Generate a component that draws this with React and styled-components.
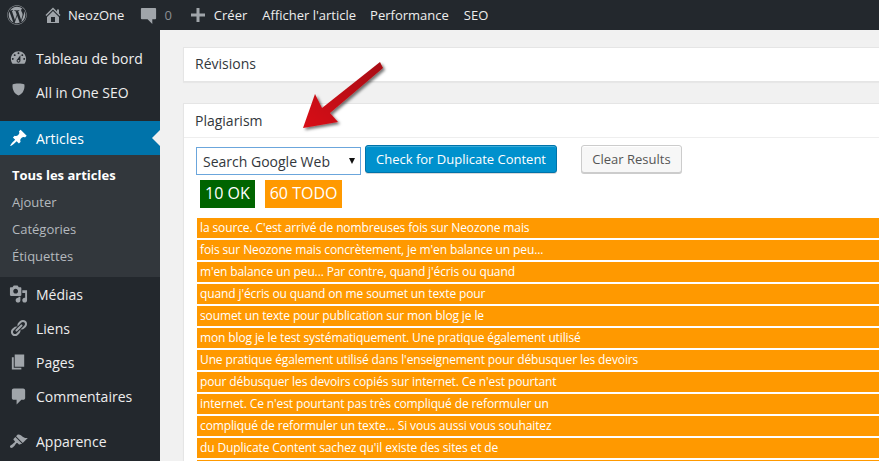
import styled, { createGlobalStyle } from "styled-components"
import { FaWordpress } from "react-icons/fa"

const GlobalStyle = createGlobalStyle`
  html, body {
    margin: 0;
    padding: 0;
    height: 100%;
    overflow: hidden;
    background: #f1f1f1;
    font-family: "Open Sans", sans-serif;
  }
`

const Page = styled.div`
  position: relative;
  width: 879px;
  height: 461px;
  overflow: hidden;
  display: flex;
  flex-direction: column;
`

const TopBar = styled.header`
  display: flex;
  align-items: center;
  flex: 0 0 30px;
  height: 30px;
  background: #23282d;
  color: #eee;
  font-size: 13px;
`

const BarItem = styled.div`
  display: flex;
  align-items: center;
  gap: ${(p) => p.$gap || 5}px;
  margin-left: ${(p) => p.$left || 0}px;
  color: ${(p) => p.$muted ? "#8a8e92" : "#eee"};
  white-space: nowrap;
  svg { color: #a0a5aa; flex: none; }
`

const Body = styled.div`
  display: flex;
  flex: 1;
  min-height: 0;
`

const Sidebar = styled.nav`
  flex: 0 0 160px;
  width: 160px;
  padding-top: 11px;
  background: #23282d;
`

const MenuItem = styled.div`
  position: relative;
  display: flex;
  align-items: center;
  height: 34px;
  padding-left: 9px;
  gap: 8px;
  margin-top: ${(p) => p.$top || 0}px;
  font-size: 14px;
  color: ${(p) => p.$active ? "#fff" : "#eee"};
  background: ${(p) => p.$active ? "#0073aa" : "transparent"};

  &::after {
    content: "";
    display: ${(p) => p.$active ? "block" : "none"};
    position: absolute;
    right: 0;
    top: 9px;
    border: 8px solid transparent;
    border-right-color: #f1f1f1;
    border-left-width: 0;
  }
`

const IconSlot = styled.span`
  display: flex;
  align-items: center;
  justify-content: center;
  width: 19px;
  height: 20px;
  color: ${(p) => p.$active ? "#fff" : "#a0a5aa"};
  transform: translateY(${(p) => p.$shift || 0}px);
`

const SubMenu = styled.div`
  padding: 6px 0 8px;
  background: #32373c;
`

const SubItem = styled.div`
  display: flex;
  align-items: center;
  height: 27px;
  padding-left: 12px;
  font-size: 13px;
  font-weight: ${(p) => p.$current ? 700 : 400};
  color: ${(p) => p.$current ? "#fff" : "#b4b9be"};
`

const Content = styled.main`
  flex: 1;
  min-width: 0;
  padding: 17px 0 0 23px;
  overflow: hidden;
`

const Postbox = styled.section`
  width: 760px;
  margin-bottom: 21px;
  background: #fff;
  box-shadow: 0 1px 1px rgba(0, 0, 0, 0.04);
  border: 1px solid #e5e5e5;
  border-right: 0;
`

const BoxTitle = styled.h2`
  box-sizing: border-box;
  margin: 0;
  height: ${(p) => p.$ruled ? 34 : 33}px;
  display: flex;
  align-items: center;
  padding: 0 0 ${(p) => p.$ruled ? 1 : 2}px 11px;
  font-size: 14px;
  font-weight: 500;
  color: #32373c;
  border-bottom: ${(p) => p.$ruled ? "1px solid #eee" : "0"};
`

const BoxInside = styled.div`
  padding: 7px 0 0 12px;
`

const Controls = styled.div`
  display: flex;
  align-items: flex-start;
`

const SelectWrap = styled.div`
  position: relative;
  margin-top: 2px;
  width: 165px;
  height: 28px;

  &::after {
    content: "";
    position: absolute;
    right: 6px;
    top: 11px;
    border: 3px solid transparent;
    border-top: 6px solid #111;
    border-bottom-width: 0;
  }
`

const Select = styled.select`
  appearance: none;
  width: 100%;
  height: 100%;
  box-sizing: border-box;
  padding: 0 0 0 6px;
  border: 1px solid #6ba6dc;
  border-radius: 0;
  background: #fff;
  color: #32373c;
  font-family: "Open Sans", sans-serif;
  font-size: 14px;
`

const Button = styled.button`
  box-sizing: border-box;
  height: 28px;
  margin-left: ${(p) => p.$left}px;
  padding: 0;
  width: ${(p) => p.$width}px;
  border-radius: 3px;
  font-family: "Open Sans", sans-serif;
  font-size: 13px;
  border: 1px solid ${(p) => p.$primary ? "#0073aa" : "#ccc"};
  background: ${(p) => p.$primary ? "#0091cd" : "#f7f7f7"};
  color: ${(p) => p.$primary ? "#fff" : "#555"};
  box-shadow: ${(p) => p.$primary ? "inset 0 1px 0 rgba(120, 200, 230, 0.5), 0 1px 0 rgba(0, 0, 0, 0.15)" : "inset 0 1px 0 #fff, 0 1px 0 #ccc"};
`

const Counters = styled.div`
  display: flex;
  gap: 10px;
  margin: 5px 0 10px 4px;
`

const Counter = styled.span`
  display: block;
  height: 28px;
  line-height: 27px;
  padding: 0 5px;
  font-size: 16px;
  color: #fff;
  background: ${(p) => p.$ok ? "#006400" : "#ff9900"};
`

const Results = styled.div`
  display: flex;
  flex-direction: column;
  gap: 2px;
  margin-left: 1px;
`

const Row = styled.div`
  height: 20px;
  line-height: 20px;
  padding-left: 3px;
  font-size: 12px;
  letter-spacing: -0.12px;
  color: #fff;
  white-space: nowrap;
  background: #ff9900;
`

const Arrow = styled.svg`
  position: absolute;
  left: 295px;
  top: 52px;
`

const Dashicon = ({ d, size = 20 }) => (
  <svg width={size} height={size} viewBox="0 0 20 20" fill="currentColor">
    <path d={d} />
  </svg>
)

const icons = {
  home: "M16 8.5l1.53 1.53-1.06 1.06L10 4.62l-6.47 6.47-1.06-1.06L10 2.5l4 4v-2h2v4zm-6-2.46l6 5.99V18H4v-5.97zM12 17v-5H8v5h4z",
  barComment: "M3 2h14a1 1 0 0 1 1 1v10a1 1 0 0 1-1 1h-3v5l-5-5H3a1 1 0 0 1-1-1V3a1 1 0 0 1 1-1z",
  plus: "M8.5 3h3v5.5H17v3h-5.5V17h-3v-5.5H3v-3h5.5z",
  dashboard: "M3.76 16h12.48c1.1-1.43 1.76-3.21 1.76-5 0-4.42-3.58-8-8-8s-8 3.58-8 8c0 1.79.66 3.57 1.76 5zM10 4c.55 0 1 .45 1 1s-.45 1-1 1-1-.45-1-1 .45-1 1-1zM6 6c.55 0 1 .45 1 1s-.45 1-1 1-1-.45-1-1 .45-1 1-1zm8 0c.55 0 1 .45 1 1s-.45 1-1 1-1-.45-1-1 .45-1 1-1zm-5.37 5.55L12 7v6c0 1.1-.9 2-2 2s-2-.9-2-2c0-.57.24-1.08.63-1.45zM4 10c.55 0 1 .45 1 1s-.45 1-1 1-1-.45-1-1 .45-1 1-1zm12 0c.55 0 1 .45 1 1s-.45 1-1 1-1-.45-1-1 .45-1 1-1zm-5 3c0-.55-.45-1-1-1s-1 .45-1 1 .45 1 1 1 1-.45 1-1z",
  shield: "M3 4C6 2.5 14 2.5 17 4c.5 6-2 11-7 13C5 15 2.5 10 3 4z",
  pin: "M10.44 3.02l1.82-1.82 6.36 6.35-1.83 1.82c-1.05-.68-2.48-.57-3.41.36l-.75.75c-.92.93-1.04 2.35-.35 3.41l-1.83 1.82-2.41-2.41-2.8 2.79c-.42.42-3.38 2.71-3.8 2.29s1.86-3.39 2.28-3.81l2.79-2.79L4.1 9.36l1.83-1.82c1.05.69 2.48.57 3.41-.36l.75-.75c.93-.92 1.04-2.35.35-3.41z",
  media: "M13 11V4c0-.55-.45-1-1-1h-1.67L9 1H5L3.67 3H2c-.55 0-1 .45-1 1v7c0 .55.45 1 1 1h10c.55 0 1-.45 1-1zM7 4.5c1.38 0 2.5 1.12 2.5 2.5S8.38 9.5 7 9.5 4.5 8.38 4.5 7 5.62 4.5 7 4.5zM14 6h5v10.5c0 1.38-1.12 2.5-2.5 2.5S14 17.88 14 16.5s1.12-2.5 2.5-2.5c.17 0 .34.02.5.05V9h-3V6zm-4 8.05V13h2v3.5c0 1.38-1.12 2.5-2.5 2.5S7 17.88 7 16.5 8.12 14 9.5 14c.17 0 .34.02.5.05z",
  links: "M17.74 2.76c1.68 1.69 1.68 4.41 0 6.1l-1.53 1.52c-1.12 1.12-2.7 1.47-4.14 1.09l2.62-2.61.76-.77.76-.76c.84-.84.84-2.2 0-3.04-.84-.85-2.2-.85-3.04 0l-.77.76-3.38 3.38c-.37-1.44-.02-3.02 1.1-4.14l1.52-1.53c1.69-1.68 4.42-1.68 6.1 0zM8.59 13.43l5.34-5.34c.42-.42.42-1.1 0-1.52-.44-.43-1.13-.39-1.53 0l-5.33 5.34c-.42.42-.42 1.1 0 1.52.44.43 1.13.39 1.52 0zm-.76 2.29l4.14-4.15c.38 1.44.03 3.02-1.09 4.14l-1.52 1.53c-1.69 1.68-4.41 1.68-6.1 0-1.68-1.68-1.68-4.42 0-6.1l1.53-1.52c1.12-1.12 2.7-1.47 4.14-1.1l-4.14 4.15c-.85.84-.85 2.2 0 3.05.84.84 2.2.84 3.04 0z",
  pages: "M6 15V2h10v13H6zm-1 1h8v2H3V5h2v11z",
  comments: "M5 2h10c1.1 0 2 .9 2 2v8c0 1.1-.9 2-2 2h-2l-5 5v-5H5c-1.1 0-2-.9-2-2V4c0-1.1.9-2 2-2z",
  brush: "M14.48 11.06L7.41 3.99l1.5-1.5c.5-.56 2.3-.47 3.51.32 1.21.8 1.43 1.28 2.91 2.1 1.18.64 2.45 1.26 4.45.85zm-.71.71L6.7 4.7 4.93 6.47c-.39.39-.39 1.02 0 1.41l1.06 1.06c.39.39.39 1.03 0 1.42-.6.6-1.43 1.11-2.21 1.69-.35.26-.7.53-1.01.84C1.43 13.23.4 14.89 1.41 15.9c1.01 1.01 2.67-.02 3.77-1.31.31-.31.58-.66.84-1.01.58-.78 1.09-1.61 1.69-2.21.39-.39 1.03-.39 1.42 0l1.06 1.06c.39.39 1.02.39 1.41 0z",
}

const menu = [
  { icon: "media", label: "Médias" },
  { icon: "links", label: "Liens" },
  { icon: "pages", label: "Pages" },
  { icon: "comments", label: "Commentaires" },
]

const rows = [
  "la source. C'est arrivé de nombreuses fois sur Neozone mais",
  "fois sur Neozone mais concrètement, je m'en balance un peu...",
  "m'en balance un peu... Par contre, quand j'écris ou quand",
  "quand j'écris ou quand on me soumet un texte pour",
  "soumet un texte pour publication sur mon blog je le",
  "mon blog je le test systématiquement. Une pratique également utilisé",
  "Une pratique également utilisé dans l'enseignement pour débusquer les devoirs",
  "pour débusquer les devoirs copiés sur internet. Ce n'est pourtant",
  "internet. Ce n'est pourtant pas très compliqué de reformuler un",
  "compliqué de reformuler un texte... Si vous aussi vous souhaitez",
  "du Duplicate Content sachez qu'il existe des sites et de",
  "",
]

export default function App() {
  return (
    <Page>
      <GlobalStyle />
      <TopBar>
        <BarItem $left={7}><FaWordpress size={20} /></BarItem>
        <BarItem $left={16}><Dashicon d={icons.home} />NeozOne</BarItem>
        <BarItem $left={15} $gap={6} $muted><Dashicon d={icons.barComment} size={19} />0</BarItem>
        <BarItem $left={16} $gap={6}><Dashicon d={icons.plus} />Créer</BarItem>
        <BarItem $left={15}>Afficher l'article</BarItem>
        <BarItem $left={14}>Performance</BarItem>
        <BarItem $left={15}>SEO</BarItem>
      </TopBar>
      <Body>
        <Sidebar>
          <MenuItem><IconSlot><Dashicon d={icons.dashboard} /></IconSlot>Tableau de bord</MenuItem>
          <MenuItem><IconSlot $shift={-3}><Dashicon d={icons.shield} size={17} /></IconSlot>All in One SEO</MenuItem>
          <MenuItem $top={12} $active><IconSlot $active><Dashicon d={icons.pin} /></IconSlot>Articles</MenuItem>
          <SubMenu>
            <SubItem $current>Tous les articles</SubItem>
            <SubItem>Ajouter</SubItem>
            <SubItem>Catégories</SubItem>
            <SubItem>Étiquettes</SubItem>
          </SubMenu>
          {menu.map((item) => (
            <MenuItem key={item.label}><IconSlot><Dashicon d={icons[item.icon]} /></IconSlot>{item.label}</MenuItem>
          ))}
          <MenuItem $top={11}><IconSlot $shift={1}><Dashicon d={icons.brush} /></IconSlot>Apparence</MenuItem>
        </Sidebar>
        <Content>
          <Postbox><BoxTitle>Révisions</BoxTitle></Postbox>
          <Postbox>
            <BoxTitle $ruled>Plagiarism</BoxTitle>
            <BoxInside>
              <Controls>
                <SelectWrap>
                  <Select defaultValue="web">
                    <option value="web">Search Google Web</option>
                  </Select>
                </SelectWrap>
                <Button $primary $left={4} $width={192}>Check for Duplicate Content</Button>
                <Button $left={24} $width={101}>Clear Results</Button>
              </Controls>
              <Counters>
                <Counter $ok>10 OK</Counter>
                <Counter>60 TODO</Counter>
              </Counters>
              <Results>
                {rows.map((text, i) => <Row key={i}>{text}</Row>)}
              </Results>
            </BoxInside>
          </Postbox>
        </Content>
      </Body>
      <Arrow width="100" height="90" viewBox="0 0 100 90">
        <defs>
          <filter id="arrowShadow" x="-20%" y="-20%" width="150%" height="150%">
            <feDropShadow dx="2" dy="2" stdDeviation="1.5" floodColor="#000" floodOpacity="0.55" />
          </filter>
          <linearGradient id="arrowFill" x1="0" y1="1" x2="1" y2="0">
            <stop offset="0" stopColor="#d81017" />
            <stop offset="1" stopColor="#a80f14" />
          </linearGradient>
        </defs>
        <path filter="url(#arrowShadow)" fill="url(#arrowFill)" d="M8 76 L20 42 L27 56 L85 10 L88 16 L35 61 L43 70 Z" />
      </Arrow>
    </Page>
  )
}
